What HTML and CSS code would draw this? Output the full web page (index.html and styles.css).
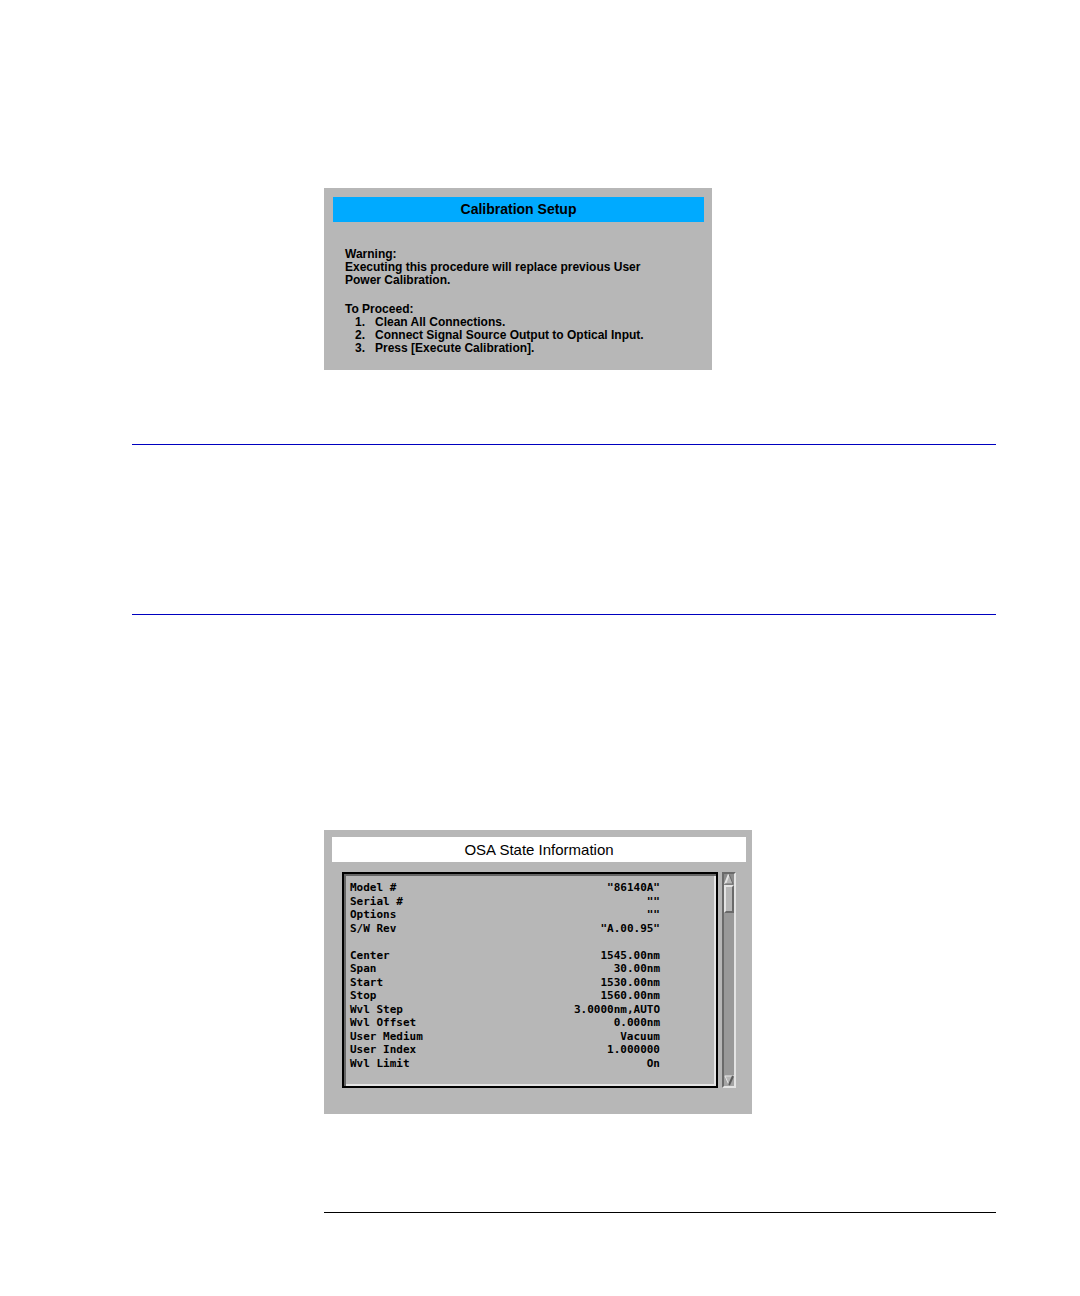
FILE: index.html
```
<!DOCTYPE html>
<html lang="en">
<head>
    <meta charset="UTF-8">
    <meta name="viewport" content="width=device-width, initial-scale=1.0">
    <title>Calibration Setup</title>
    <link rel="stylesheet" href="styles.css">
</head>
<body>
    <main class="page">
        <section class="panel setup-panel">
            <h2 class="panel-title">Calibration Setup</h2>
            <div class="setup-text">
                <p>Warning:<br>Executing this procedure will replace previous User<br>Power Calibration.</p>
                <p>To Proceed:</p>
                <ol class="steps">
                    <li>Clean All Connections.</li>
                    <li>Connect Signal Source Output to Optical Input.</li>
                    <li>Press [Execute Calibration].</li>
                </ol>
            </div>
        </section>

        <hr class="section-rule">
        <hr class="section-rule second-rule">

        <section class="panel state-panel">
            <h2 class="panel-title">OSA State Information</h2>
            <div class="state-body">
                <div class="state-frame">
                    <table class="state-table">
                        <tr><th scope="row">Model #</th><td>"86140A"</td></tr>
                        <tr><th scope="row">Serial #</th><td>""</td></tr>
                        <tr><th scope="row">Options</th><td>""</td></tr>
                        <tr><th scope="row">S/W Rev</th><td>"A.00.95"</td></tr>
                        <tr><td colspan="2">&nbsp;</td></tr>
                        <tr><th scope="row">Center</th><td>1545.00nm</td></tr>
                        <tr><th scope="row">Span</th><td>30.00nm</td></tr>
                        <tr><th scope="row">Start</th><td>1530.00nm</td></tr>
                        <tr><th scope="row">Stop</th><td>1560.00nm</td></tr>
                        <tr><th scope="row">Wvl Step</th><td>3.0000nm,AUTO</td></tr>
                        <tr><th scope="row">Wvl Offset</th><td>0.000nm</td></tr>
                        <tr><th scope="row">User Medium</th><td>Vacuum</td></tr>
                        <tr><th scope="row">User Index</th><td>1.000000</td></tr>
                        <tr><th scope="row">Wvl Limit</th><td>On</td></tr>
                    </table>
                </div>
                <div class="scrollbar">
                    <button class="scroll-btn" type="button" aria-label="Scroll up">
                        <svg viewBox="0 0 10 11" width="10" height="11">
                            <rect width="10" height="11" fill="#8c8c8c"/>
                            <path d="M5 0L9 10H1Z" fill="#b7b7b7"/>
                            <path d="M5 0L1 10" stroke="#e4e4e4" stroke-width="2" fill="none"/>
                            <path d="M5 0L9 10H1" stroke="#6a6a6a" fill="none"/>
                        </svg>
                    </button>
                    <div class="scroll-thumb"></div>
                    <button class="scroll-btn scroll-down" type="button" aria-label="Scroll down">
                        <svg viewBox="0 0 10 11" width="10" height="11">
                            <rect width="10" height="11" fill="#a4a4a4"/>
                            <path d="M1 1H9L5 10Z" fill="#b7b7b7"/>
                            <path d="M5 10L1 1H10" stroke="#e4e4e4" fill="none"/>
                            <path d="M9 1L5 10" stroke="#5c5c5c" stroke-width="2" fill="none"/>
                        </svg>
                    </button>
                </div>
            </div>
        </section>

        <hr class="footer-rule">
    </main>
</body>
</html>
```
FILE: styles.css
```
body {
    margin: 0;
    background-color: #fff;
    color: #000;
    font-family: "Liberation Sans", Arial, sans-serif;
}

.page {
    padding: 188px 84px 83px 132px;
}

.panel {
    box-sizing: border-box;
    margin-left: 192px;
    background-color: #b7b7b7;
}

.panel-title {
    margin: 0;
    font-size: 14px;
    line-height: 25px;
    text-align: center;
}

/* Calibration dialog */
.setup-panel {
    max-width: 388px;
    padding: 9px 8px 15px 9px;
}

.setup-panel .panel-title {
    background-color: #00aaff;
}

.setup-text {
    padding: 26px 12px 0;
    font-size: 12px;
    font-weight: bold;
    line-height: 13px;
}

.setup-text p {
    margin: 0;
}

.setup-text p + p {
    margin-top: 16px;
}

.steps {
    margin: 0;
    padding-left: 10px;
    list-style: none;
    counter-reset: step;
}

.steps li {
    display: flex;
    counter-increment: step;
}

.steps li::before {
    content: counter(step) ".";
    width: 20px;
}

/* Rules between sections */
hr {
    margin: 0;
    border: 0;
    height: 1px;
}

.section-rule {
    margin-top: 74px;
    background-color: #0000c0;
}

.second-rule {
    margin-top: 169px;
}

.footer-rule {
    margin-top: 98px;
    margin-left: 192px;
    background-color: #000;
}

/* State dialog */
.state-panel {
    max-width: 428px;
    margin-top: 215px;
    padding: 7px 6px 26px 8px;
}

.state-panel .panel-title {
    background-color: #fff;
    font-weight: normal;
    font-size: 15px;
}

.state-body {
    display: flex;
    gap: 4px;
    padding: 10px 10px 0;
}

.state-frame {
    flex: 1;
    padding: 7px 56px 16px 6px;
    border: 2px solid #000;
    box-shadow: inset 2px 2px #666, inset -2px -2px #e4e4e4;
}

.state-table {
    width: 100%;
    height: 189px;
    border-collapse: collapse;
    font-family: "DejaVu Sans Mono", monospace;
    font-size: 11px;
    font-weight: bold;
    line-height: 13px;
}

.state-table th,
.state-table td {
    padding: 0;
    text-align: left;
}

.state-table td {
    text-align: right;
}

.scrollbar {
    box-sizing: border-box;
    display: flex;
    flex-direction: column;
    width: 14px;
    border: 2px solid;
    border-color: #6a6a6a #e4e4e4 #e4e4e4 #6a6a6a;
    background-color: #999;
}

.scroll-btn {
    display: block;
    height: 11px;
    padding: 0;
    border: 0;
    background: none;
}

.scroll-btn svg {
    display: block;
}

.scroll-thumb {
    box-sizing: border-box;
    height: 28px;
    border: 2px solid;
    border-color: #e4e4e4 #6a6a6a #6a6a6a #e4e4e4;
    background-color: #b7b7b7;
}

.scroll-down {
    margin-top: auto;
}
```
